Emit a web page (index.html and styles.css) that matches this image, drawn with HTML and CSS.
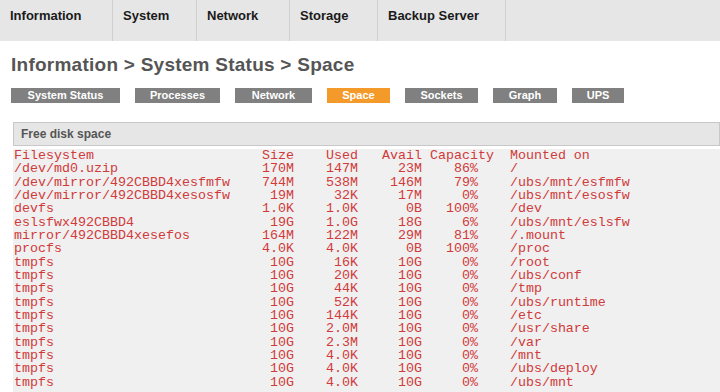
FILE: index.html
```html
<!DOCTYPE html>
<html lang="en">
<head>
    <meta charset="UTF-8">
    <meta name="viewport" content="width=device-width, initial-scale=1.0">
    <title>Information - System Status - Space</title>
    <link rel="stylesheet" href="styles.css">
</head>
<body>
    <div class="topnav">
        <a class="topnav-item" href="#">Information</a>
        <a class="topnav-item" href="#">System</a>
        <a class="topnav-item" href="#">Network</a>
        <a class="topnav-item" href="#">Storage</a>
        <a class="topnav-item" href="#">Backup Server</a>
    </div>

    <div class="content">
        <h1 class="page-title">Information &gt; System Status &gt; Space</h1>

        <div class="tabs">
            <a class="tab" href="#">System Status</a>
            <a class="tab" href="#">Processes</a>
            <a class="tab" href="#">Network</a>
            <a class="tab active" href="#">Space</a>
            <a class="tab" href="#">Sockets</a>
            <a class="tab" href="#">Graph</a>
            <a class="tab" href="#">UPS</a>
        </div>

        <div class="panel">
            <div class="panel-head">Free disk space</div>
<pre class="panel-body">Filesystem                     Size    Used   Avail Capacity  Mounted on
/dev/md0.uzip                  170M    147M     23M    86%    /
/dev/mirror/492CBBD4xesfmfw    744M    538M    146M    79%    /ubs/mnt/esfmfw
/dev/mirror/492CBBD4xesosfw     19M     32K     17M     0%    /ubs/mnt/esosfw
devfs                          1.0K    1.0K      0B   100%    /dev
eslsfwx492CBBD4                 19G    1.0G     18G     6%    /ubs/mnt/eslsfw
mirror/492CBBD4xesefos         164M    122M     29M    81%    /.mount
procfs                         4.0K    4.0K      0B   100%    /proc
tmpfs                           10G     16K     10G     0%    /root
tmpfs                           10G     20K     10G     0%    /ubs/conf
tmpfs                           10G     44K     10G     0%    /tmp
tmpfs                           10G     52K     10G     0%    /ubs/runtime
tmpfs                           10G    144K     10G     0%    /etc
tmpfs                           10G    2.0M     10G     0%    /usr/share
tmpfs                           10G    2.3M     10G     0%    /var
tmpfs                           10G    4.0K     10G     0%    /mnt
tmpfs                           10G    4.0K     10G     0%    /ubs/deploy
tmpfs                           10G    4.0K     10G     0%    /ubs/mnt</pre>
        </div>
    </div>
</body>
</html>
```

FILE: styles.css
```css
body {
    margin: 0;
    font-family: 'Liberation Sans', Arial, sans-serif;
    background: white;
    overflow: hidden;
}
.topnav {
    display: grid;
    grid-template-columns: 113px 84px 93px 88px 128px;
    height: 41px;
    background: #e6e6e6;
}
.topnav-item {
    padding: 8px 0 0 10px;
    border-right: 1px solid #d0d0d0;
    font-size: 13px;
    font-weight: bold;
    line-height: 16px;
    color: #1a1a1a;
    text-decoration: none;
}
.content {
    padding: 13px 0 0 11px;
}
.page-title {
    margin: 0;
    font-size: 19px;
    line-height: 22px;
    letter-spacing: 0.25px;
    color: #555;
}
.tabs {
    display: grid;
    grid-template-columns: 109px 85px 77px 63px 73px 64px 52px;
    gap: 15px;
    margin-top: 12px;
}
.tab {
    background: #808080;
    color: white;
    font-size: 11px;
    font-weight: bold;
    line-height: 15px;
    text-align: center;
    text-decoration: none;
}
.tab.active { background: #f39a2b; }
.panel {
    margin: 19px 0 0 2px;
}
.panel-head {
    height: 22px;
    padding-left: 7px;
    border: 1px solid #c8c8c8;
    background: #e6e6e6;
    font-size: 12px;
    font-weight: bold;
    line-height: 22px;
    color: #555;
}
.panel-body {
    margin: 3px 0 0;
    padding: 0 1px 10px;
    background: #f0f0f0;
    color: #d03a3a;
    font-family: 'Liberation Mono', 'Courier New', monospace;
    font-size: 13.333px;
    line-height: 13.333px;
}
```
